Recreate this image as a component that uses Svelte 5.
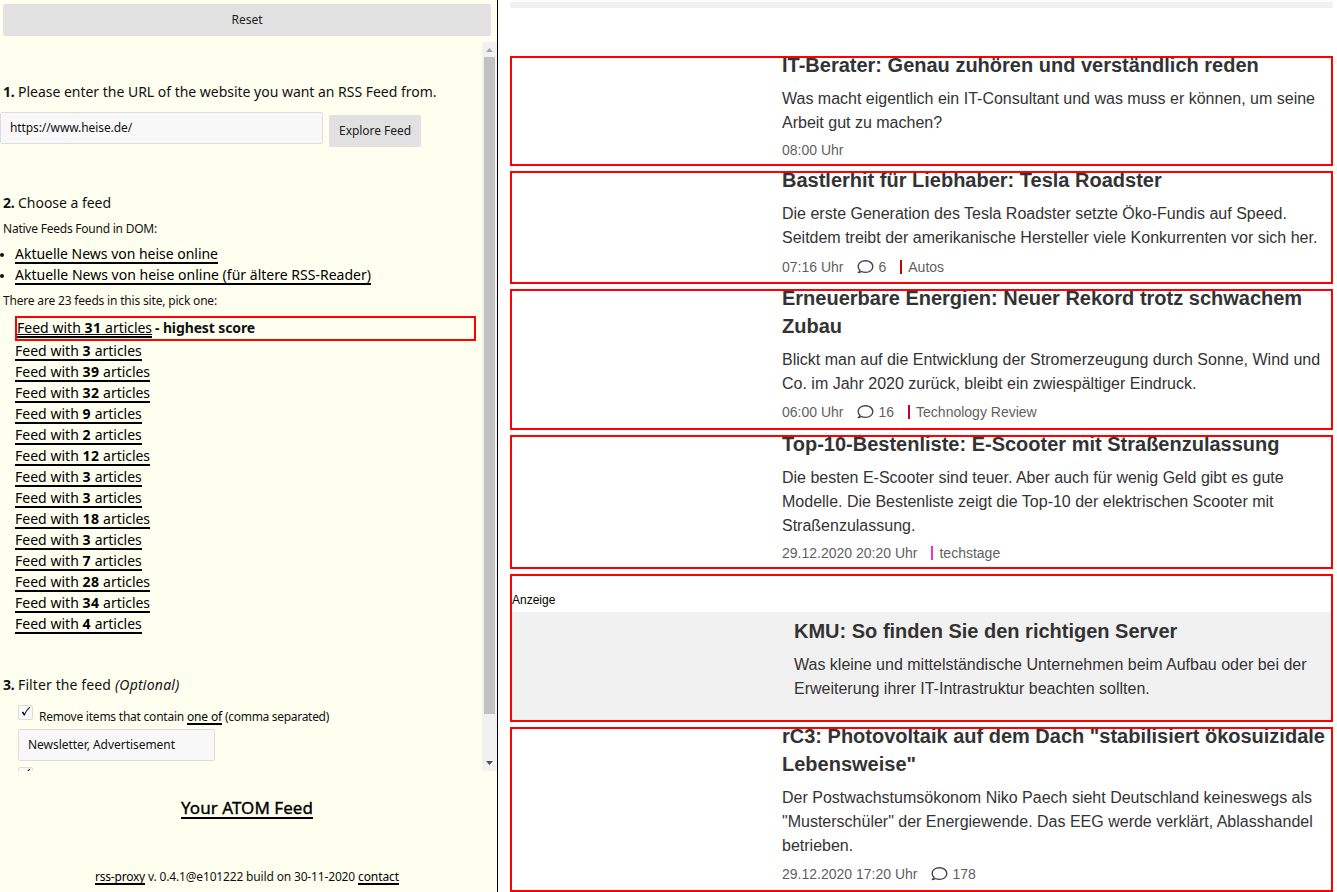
<script>
  const feeds = [3, 39, 32, 9, 2, 12, 3, 3, 18, 3, 7, 28, 34, 4];

  const articles = [
    { height: 110, gap: 5, title: ['IT-Berater: Genau zuhören und verständlich reden'],
      text: ['Was macht eigentlich ein IT-Consultant und was muss er können, um seine', 'Arbeit gut zu machen?'],
      time: '08:00 Uhr' },
    { height: 113, gap: 7, title: ['Bastlerhit für Liebhaber: Tesla Roadster'],
      text: ['Die erste Generation des Tesla Roadster setzte Öko-Fundis auf Speed.', 'Seitdem treibt der amerikanische Hersteller viele Konkurrenten vor sich her.'],
      time: '07:16 Uhr', comments: 6, section: 'Autos', tone: 'autos' },
    { height: 141, gap: 6, title: ['Erneuerbare Energien: Neuer Rekord trotz schwachem', 'Zubau'],
      text: ['Blickt man auf die Entwicklung der Stromerzeugung durch Sonne, Wind und', 'Co. im Jahr 2020 zurück, bleibt ein zwiespältiger Eindruck.'],
      time: '06:00 Uhr', comments: 16, section: 'Technology Review', tone: 'review' },
    { height: 134, gap: 5, title: ['Top-10-Bestenliste: E-Scooter mit Straßenzulassung'],
      text: ['Die besten E-Scooter sind teuer. Aber auch für wenig Geld gibt es gute', 'Modelle. Die Bestenliste zeigt die Top-10 der elektrischen Scooter mit', 'Straßenzulassung.'],
      time: '29.12.2020 20:20 Uhr', section: 'techstage', tone: 'techstage' },
    { height: 148, ad: true, title: ['KMU: So finden Sie den richtigen Server'],
      text: ['Was kleine und mittelständische Unternehmen beim Aufbau oder bei der', 'Erweiterung ihrer IT-Intrastruktur beachten sollten.'] },
    { height: 165, gap: 6, title: ['rC3: Photovoltaik auf dem Dach "stabilisiert ökosuizidale', 'Lebensweise"'],
      text: ['Der Postwachstumsökonom Niko Paech sieht Deutschland keineswegs als', '"Musterschüler" der Energiewende. Das EEG werde verklärt, Ablasshandel', 'betrieben.'],
      time: '29.12.2020 17:20 Uhr', comments: 178 }
  ];

  // Tracks a label's letters so that it takes up the given width.
  function fit(node, width) {
    const count = [...node.textContent].length;
    const natural = node.getBoundingClientRect().width;
    node.style.letterSpacing = `${(width - natural) / count}px`;
  }
</script>

{#snippet feedLabel(count)}
  <span use:fit={67.5}>Feed with&nbsp;</span><b use:fit={count > 9 ? 17 : 8.7}>{count}</b><span use:fit={50.5}>&nbsp;articles</span>
{/snippet}

{#snippet tick()}
  <span class="check"><svg width="13" height="13" viewBox="0 0 13 13"><path d="M3.6 6.2 L5.4 8.900 Q7.200 4.300 10.800 1.200" fill="none" stroke="#111" stroke-width="1.100" /><path d="M3.500 6 L5.400 8.700" stroke="#111" stroke-width="1.600" /></svg></span>
{/snippet}

<div class="app">
  <aside>
    <button class="reset"><span use:fit={31}>Reset</span></button>
    <div class="scroller">
      <div class="content">
        <h2 class="first"><b use:fit={11.5}>1.</b><span class="step" use:fit={418.5}>Please enter the URL of the website you want an RSS Feed from.</span></h2>
        <div class="urlrow">
          <div class="input url"><span use:fit={122}>https://www.heise.de/</span></div>
          <button class="explore"><span use:fit={72}>Explore Feed</span></button>
        </div>
        <h2 class="second"><b use:fit={11.5}>2.</b><span class="step" use:fit={93}>Choose a feed</span></h2>
        <p class="native"><span use:fit={154}>Native Feeds Found in DOM:</span></p>
        <ul class="natives">
          <li><a href="#n1"><span use:fit={203}>Aktuelle News von heise online</span></a></li>
          <li><a href="#n2"><span use:fit={356}>Aktuelle News von heise online (für ältere RSS-Reader)</span></a></li>
        </ul>
        <p class="pick"><span use:fit={214}>There are 23 feeds in this site, pick one:</span></p>
        <div class="feeds">
          <div class="best"><a href="#best">{@render feedLabel(31)}</a><b class="score" use:fit={100}>- highest score</b></div>
          {#each feeds as count}
            <div class="feed"><a href="#feed">{@render feedLabel(count)}</a></div>
          {/each}
        </div>
        <h2 class="third"><b use:fit={11.5}>3.</b><span class="step" use:fit={93}>Filter the feed</span><i use:fit={64.5}>(Optional)</i></h2>
        <div class="filter">
          {@render tick()}
          <p><span use:fit={145}>Remove items that contain</span><a href="#oneof"><span use:fit={35}>one of</span></a><span use:fit={104}>(comma separated)</span></p>
        </div>
        <div class="input words"><span use:fit={147}>Newsletter, Advertisement</span></div>
        <div class="filter next">{@render tick()}</div>
      </div>
      <div class="bar">
        <svg width="15" height="15"><path d="M4 10h7L7.5 6z" fill="#a3a3a3" /></svg>
        <div class="thumb"></div>
        <svg width="15" height="15"><path d="M4 5h7L7.5 9z" fill="#505050" /></svg>
      </div>
    </div>
    <div class="atom"><a href="#atom"><span use:fit={132}>Your ATOM Feed</span></a></div>
    <footer><a href="#proxy"><span use:fit={50}>rss-proxy</span></a><span use:fit={207}>v. 0.4.1@e101222 build on 30-11-2020</span><a href="#contact"><span use:fit={41}>contact</span></a></footer>
  </aside>

  <main>
    <div class="rule"></div>
    {#each articles as a}
      <article class:ad={a.ad} style:height="{a.height}px">
        {#if a.ad}<div class="label">Anzeige</div>{/if}
        <div class="body">
          <h3>{#each a.title as line}<span>{line}</span>{/each}</h3>
          <div class="text">{#each a.text as line}<span>{line}</span>{/each}</div>
          {#if a.time}
            <div class="meta" style:margin-top="{a.gap}px">
              <span>{a.time}</span>
              {#if a.comments}
                <span class="comments">
                  <svg width="17" height="15" viewBox="0 0 17 15"><path d="M3 11.300C1.600 10.200 1.200 8.800 1.200 7.400c0-3.400 3.200-5.700 7.300-5.700s7.300 2.400 7.300 5.800-3.200 5.900-7.300 5.900c-1.500 0-2.800-.300-3.900-.900-.900.700-2 1.100-3.300 1 .900-.600 1.500-1.300 1.700-2.200z" fill="none" stroke="#444" stroke-width="1.400" stroke-linejoin="round" /></svg>
                  {a.comments}
                </span>
              {/if}
              {#if a.section}<span class="section {a.tone}">{a.section}</span>{/if}
            </div>
          {/if}
        </div>
      </article>
    {/each}
  </main>
</div>

<style>
  .app { display: flex; width: 1337px; height: 892px; overflow: hidden; background: #fff; }
  .app * { box-sizing: border-box; }
  aside { display: flex; flex-direction: column; width: 498px; height: 892px; padding-top: 4px; border-right: 1px solid #000; background: #fffff0; color: #111; font-family: "Noto Sans", sans-serif; font-size: 14px; white-space: nowrap; }
  aside span, aside b, aside i { flex: none; }
  h2, p, ul { margin: 0; padding: 0; font-weight: 400; }
  button { height: 32px; padding: 0; border: 0; border-radius: 2px; background: #e1e1e1; color: #222; font: 12px/32px "Noto Sans", sans-serif; }
  .reset { flex: none; width: 488px; margin: 0 0 6px 3px; }
  .scroller { display: flex; flex: none; height: 729px; overflow: hidden; }
  .content { width: 482px; flex: none; }
  h2 { display: flex; height: 20px; padding-left: 3px; font-size: 14px; line-height: 20px; }
  .step { margin-left: 3.5px; }
  h2 i { margin-left: 4px; }
  .first { margin-top: 40px; }
  .urlrow { display: flex; gap: 6px; height: 35px; margin-top: 10px; }
  .input { height: 32px; border: 1px solid #dcdcdf; border-radius: 2px; background: #f8f8f9; color: #111; font-size: 12px; line-height: 30px; padding-left: 9px; }
  .url { width: 323px; }
  .explore { width: 92px; margin-top: 3px; }
  .second { margin-top: 46px; }
  p { display: flex; height: 20px; padding-left: 3px; font-size: 12px; line-height: 20px; }
  .native { margin-top: 6px; }
  .natives { margin: 5px 0; padding-left: 15px; list-style: none; }
  li { display: flex; height: 21px; }
  li::before { content: ""; flex: none; width: 4px; height: 4px; margin: 9px 11px 0 -15px; border-radius: 50%; background: #111; }
  a { display: inline-flex; flex: none; height: 20px; border-bottom: 2px solid #000; color: #000; line-height: 20px; text-decoration: none; }
  .feeds { margin: 5px 6px 0 15px; }
  .feed { display: flex; height: 21px; }
  .best { display: flex; height: 25px; border: 2px solid #f00; line-height: 20px; }
  .best a { text-decoration: underline; text-decoration-thickness: 1px; text-underline-offset: 1px; text-decoration-skip-ink: none; }
  .score { margin-left: 3px; }
  .third { margin-top: 40px; }
  .filter { display: flex; height: 24px; margin: 10px 0 0 18px; }
  .check { width: 15px; height: 15px; border: 1px solid #dcdcdf; border-radius: 2px; background: #f8f8f9; line-height: 0; }
  .filter p { padding: 2px 0 0 6px; height: 22px; gap: 3px; }
  .filter a { height: 18px; }
  .words { width: 197px; margin-left: 18px; }
  .next { margin-top: 6px; }
  .bar { display: flex; flex-direction: column; width: 15px; height: 729px; background: #f1f1f1; }
  .bar svg { display: block; flex: none; }
  .thumb { width: 11px; height: 657px; margin: 0 2px auto; background: #c1c1c1; }
  .atom { display: flex; justify-content: center; margin: 27px 3px 0 0; font-size: 17px; -webkit-text-stroke: 0.35px #000; }
  .atom a { height: 21px; }
  footer { display: flex; justify-content: center; gap: 3px; margin: 48px 3px 0 0; font-size: 12px; line-height: 20px; }
  footer a { height: 18px; }

  main { display: flex; flex-direction: column; gap: 5px; width: 823px; margin-left: 12px; padding-top: 2px; color: #333; font-family: "Liberation Sans", Arial, sans-serif; white-space: nowrap; }
  .rule { flex: none; height: 6px; margin-bottom: 43px; background: #f1f1f1; }
  article { flex: none; overflow: hidden; border: 2px solid #f00; }
  .body { margin-top: -7px; padding-left: 270px; }
  h3 { margin: 0 0 8px; font-size: 20px; line-height: 28px; }
  h3 span, .text span { display: block; }
  .text { font-size: 16px; line-height: 24px; }
  .meta { display: flex; gap: 14px; color: #5f5f5f; font-size: 14px; line-height: 20px; }
  .comments { display: flex; gap: 4px; }
  .comments svg { margin-top: 2px; }
  .section { display: flex; gap: 6px; }
  .section::before { content: ""; width: 2px; height: 14px; margin-top: 3px; background: #c00; }
  .review::before { background: #c8002d; }
  .techstage::before { background: #f52cd0; }
  .label { padding-top: 17px; height: 36px; color: #000; font-size: 12px; line-height: 14px; }
  .ad .body { height: 108px; margin: 0; padding: 5px 0 0 282px; background: #f1f1f1; }
</style>
